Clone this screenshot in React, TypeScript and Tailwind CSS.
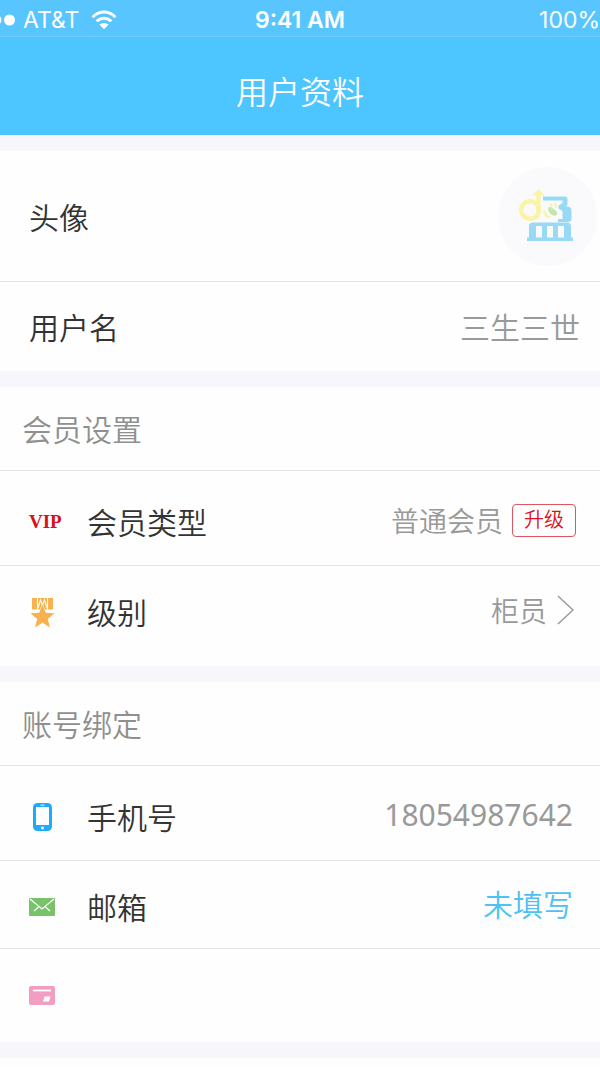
import type { ReactNode } from 'react';

function StatusBar() {
  return (
    <div className="grid h-[37px] grid-cols-[1fr_auto_1fr] items-center border-b border-[#6fcffe] bg-[#58c5fe] pt-1 font-['Inter',sans-serif] text-[23px] leading-7 text-white">
      <div className="flex items-center">
        <svg className="mr-2 h-3 w-[15px]" viewBox="0 0 15 12" fill="currentColor" aria-hidden="true">
          <circle cx="-4" cy="6" r="5.5" />
          <circle cx="9.5" cy="6" r="5.5" />
        </svg>
        <span>AT&amp;T</span>
        <svg className="ml-3 h-5 w-[26px]" viewBox="0 0 26 20" fill="none" stroke="currentColor" strokeWidth="3" aria-hidden="true">
          <path d="M1.6 7.2C8 .4 18 .4 24.4 7.2" />
          <path d="M5.7 11.3c4.2-4.2 10.4-4.2 14.6 0" />
          <path d="M8.500 14.800c2.500-2.400 6.500-2.400 9 0l-4.500 4.400z" fill="currentColor" stroke="none" />
        </svg>
      </div>
      <span className="font-semibold">9:41 AM</span>
      <span className="text-right">100%</span>
    </div>
  );
}

function AvatarLogo() {
  return (
    <svg className="h-[99px] w-[99px]" viewBox="0 0 99 99" role="img" aria-label="头像">
      <circle cx="49.5" cy="49.5" r="49.5" fill="#fafafd" />
      <g fill="none" stroke="#f9f4a6" strokeWidth="4.5">
        <circle cx="32" cy="43" r="8.8" />
        <path d="M40.5 27v18q0 4-4 6" />
      </g>
      <path d="M34 28.500l6.500-6.500 6.500 6.500z" fill="#f9f4a6" />
      <path
        d="M45 29.500h22q2.500 0 2.500 3v5l-1 2q5 0 5 4v8.500q0 3-3.500 3H60v-3h4.500V44l-4-2.500v-3l4-2.500v-2.500H45z"
        fill="#98d9f6"
      />
      <path d="M46 43.500q1 5.500 6 7M52.500 37l1.500 2.500M57.500 36l.5 5" stroke="#f7f3b4" strokeWidth="2.500" fill="none" />
      <path d="M50 40.500c4-2 5 1.500 8 3.500 2.500 2 1 5.500-2.500 4.500s-5.500-4-5.500-8z" fill="#c6e5ac" />
      <path
        d="M35 55.500h34q4 0 4 4v11h2v3.500H29v-3.500h2v-11q0-4 4-4zM38 59v11.500h6V59zM49 59v11.500h6V59zM60 59v11.500h6V59z"
        fill="#98d9f6"
        fillRule="evenodd"
      />
    </svg>
  );
}

function MedalIcon() {
  return (
    <svg className="h-[31px] w-[26px]" viewBox="0 0 26 31" fill="#f7b24f" aria-hidden="true">
      <path d="M3 1h21v11.500H3z" />
      <path d="M8.500 0v12.500M18.500 0v12.500M9 11l2.500-8 2 5 2-5L18 11" fill="none" stroke="#fefefe" strokeWidth="1.100" />
      <path
        d="M13.500 7.500l3.300 8.200 8.700.6-6.700 5.600 2.200 8.600-7.500-4.700L6 30.500l2.200-8.600-6.700-5.600 8.700-.6z"
        stroke="#fefefe"
        strokeWidth="1"
        paintOrder="stroke"
      />
    </svg>
  );
}

function PhoneIcon() {
  return (
    <svg className="h-[28px] w-[26px]" viewBox="0 0 26 28" aria-hidden="true">
      <rect x="4" y="0" width="19" height="28" rx="4.500" fill="#1eabfc" />
      <rect x="7" y="4" width="13" height="18" fill="#fff" />
      <circle cx="13.500" cy="25" r="1.400" fill="#fff" />
      <path d="M11.500 2.200h4" stroke="#fff" />
    </svg>
  );
}

function MailIcon() {
  return (
    <svg className="h-[18px] w-[26px]" viewBox="0 0 26 18" aria-hidden="true">
      <rect width="26" height="18" rx="1" fill="#78c269" />
      <path d="M1 1l12 10L25 1M5 13l4.500-4M21 13l-4.500-4" fill="none" stroke="#fff" strokeWidth="1.200" />
    </svg>
  );
}

function CardIcon() {
  return (
    <svg className="h-[19px] w-[26px]" viewBox="0 0 26 19" aria-hidden="true">
      <rect width="26" height="19" rx="2" fill="#f19ec2" />
      <path d="M4 4.500h18" stroke="#fff" strokeWidth="1.800" />
      <path d="M15.500 10.500h6l-1.500 5h-6z" fill="#fff" />
    </svg>
  );
}

function IconLabel({ icon, children }: { icon: ReactNode; children?: ReactNode }) {
  return (
    <div className="flex items-center">
      <span className="flex w-[58px] items-center">{icon}</span>
      <span className="pb-[2px]">{children}</span>
    </div>
  );
}

function SectionTitle({ children }: { children: ReactNode }) {
  return (
    <h2 className="flex h-[84px] items-center border-b border-[#e4e4e4] px-[22px] pb-[2px] font-[350] text-[#8f8f8f]">
      {children}
    </h2>
  );
}

export default function App() {
  return (
    <div className="flex min-h-screen flex-col overflow-x-hidden bg-[#f6f6fb] font-['Noto_Sans_CJK_SC',sans-serif] text-[30px] leading-10 text-[#333]">
      <header className="bg-[#4dc5ff] text-white">
        <StatusBar />
        <h1 className="flex h-[98px] items-center justify-center pt-2 text-[32px] font-[350]">用户资料</h1>
      </header>

      <main className="flex flex-1 flex-col gap-4 pt-4">
        <section className="bg-[#fefefe] font-[350]">
          <div className="flex h-[131px] items-center justify-between border-b border-[#e4e4e4] pr-[3px] pl-[29px]">
            <span>头像</span>
            <AvatarLogo />
          </div>
          <div className="flex h-[89px] items-center justify-between pr-5 pb-[2px] pl-[29px]">
            <span>用户名</span>
            <span className="text-[#999]">三生三世</span>
          </div>
        </section>

        <section className="bg-[#fefefe] font-[350]">
          <SectionTitle>会员设置</SectionTitle>
          <div className="flex h-[95px] items-center justify-between border-b border-[#e4e4e4] pt-2 pr-6 pl-[29px]">
            <IconLabel icon={<b className="font-['Liberation_Serif',serif] text-[19px] font-bold text-[#d9101c]">VIP</b>}>会员类型</IconLabel>
            <div className="flex items-center gap-[9px] pb-1">
              <span className="text-[28px] text-[#999]">普通会员</span>
              <button type="button" className="h-[33px] w-16 rounded border border-[#e05560] pb-[2px] text-[20px] leading-7 text-[#d9101c]">升级</button>
            </div>
          </div>
          <div className="flex h-[100px] items-center justify-between pr-[26px] pb-2 pl-[29px]">
            <IconLabel icon={<MedalIcon />}>级别</IconLabel>
            <a href="#level" className="flex items-center gap-[10px] pb-1 text-[28px] text-[#999]">
              柜员
              <svg className="h-[30px] w-[17px]" viewBox="0 0 17 30" fill="none" stroke="currentColor" strokeWidth="1.500" aria-hidden="true">
                <path d="M1 1l15 14L1 29" />
              </svg>
            </a>
          </div>
        </section>

        <section className="bg-[#fefefe] font-[350]">
          <SectionTitle>账号绑定</SectionTitle>
          <div className="flex h-[95px] items-center justify-between border-b border-[#e4e4e4] pt-2 pr-[27px] pl-[29px]">
            <IconLabel icon={<PhoneIcon />}>手机号</IconLabel>
            <span className="pb-1 font-['Noto_Sans',sans-serif] font-normal text-[#999]">18054987642</span>
          </div>
          <div className="flex h-[88px] items-center justify-between border-b border-[#e4e4e4] pt-1 pr-[27px] pl-[29px]">
            <IconLabel icon={<MailIcon />}>邮箱</IconLabel>
            <a href="#email" className="pb-2 text-[#4dc0f5]">未填写</a>
          </div>
          <div className="flex h-[93px] items-center pl-[29px]">
            <IconLabel icon={<CardIcon />} />
          </div>
        </section>

        <div className="min-h-[10px] flex-1 bg-[#fefefe]" />
      </main>
    </div>
  );
}
